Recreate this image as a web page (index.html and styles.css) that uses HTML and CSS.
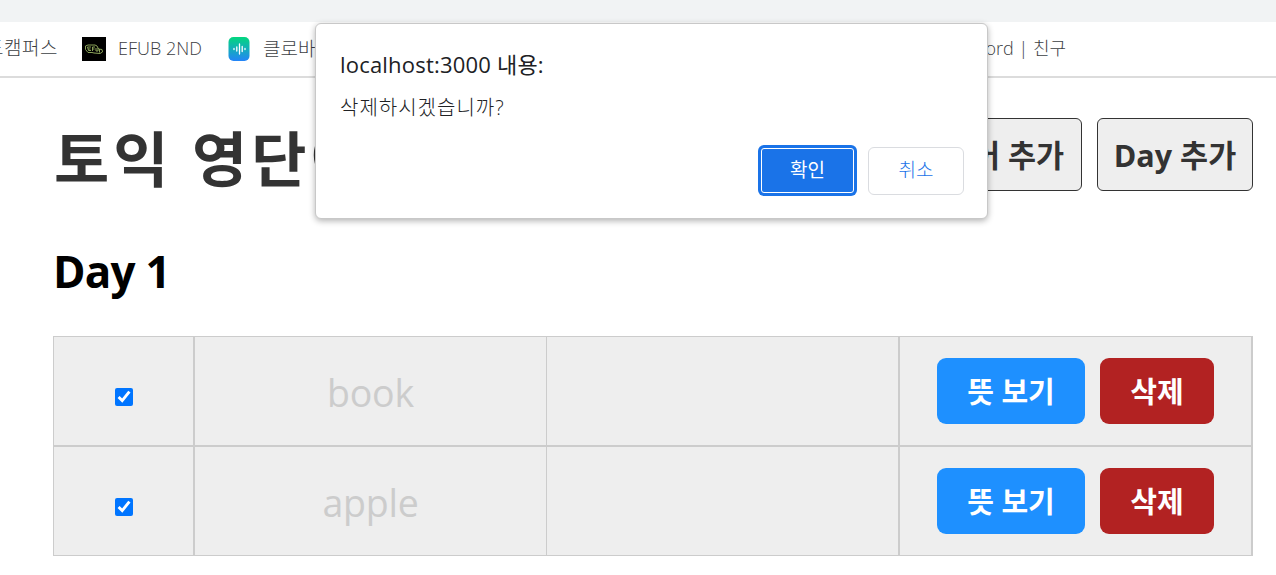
FILE: index.html
```html
<!DOCTYPE html>
<html lang="ko">
<head>
    <meta charset="utf-8">
    <title>토익 영단어</title>
    <meta name="viewport" content="width=device-width, initial-scale=1">
    <link rel="stylesheet" href="styles.css">
</head>
<body>
<div class="tab-strip"></div>
<nav class="bookmarks">
    <span class="bookmark campus">드캠퍼스</span>
    <span class="bookmark efub">
        <svg class="icon" viewBox="0 0 24 24">
            <rect width="24" height="24" fill="#000"/>
            <g fill="none" stroke="#8ba35a" stroke-width="1" stroke-linejoin="round">
                <path d="M3.500 9L6 8H13L15 9L16.500 12L20 12.500L20.500 15L18 16.500L12 16L10 15.500L6 15.500L3.500 12.500Z"/>
                <path d="M9 10H5.500L6.500 13.500H9M6 12H8.500M10.500 14V10H13M10.500 12H12.500M14 11V14H16V11M17.500 15.500V12"/>
            </g>
        </svg>
        <span class="name">EFUB 2ND</span>
    </span>
    <span class="bookmark clova">
        <svg class="icon" viewBox="0 0 24 24">
            <defs>
                <linearGradient id="clova" x1="0" y1="0" x2="0" y2="1">
                    <stop offset="0" stop-color="#03d77e"/>
                    <stop offset="1" stop-color="#2484f8"/>
                </linearGradient>
            </defs>
            <rect x="1.500" width="21" height="24" rx="5" fill="url(#clova)"/>
            <path d="M7 11.500v1M9.800 10v4M12.500 7v10M15.200 9.500v5M18 11.500v1" stroke="#fff" stroke-width="1.300" stroke-linecap="round"/>
        </svg>
        <span class="name">클로바</span>
    </span>
    <span class="bookmark discord">Discord | 친구</span>
</nav>

<main class="page">
    <header class="header">
        <h1>토익 영단어</h1>
        <div class="menu">
            <a class="link">단어 추가</a>
            <a class="link">Day 추가</a>
        </div>
    </header>
    <h2>Day 1</h2>
    <table>
        <tbody>
        <tr class="off">
            <td class="check"><input type="checkbox" checked></td>
            <td class="eng">book</td>
            <td class="kor"></td>
            <td class="actions">
                <button>뜻 보기</button><button class="btn-del">삭제</button>
            </td>
        </tr>
        <tr class="off">
            <td class="check"><input type="checkbox" checked></td>
            <td class="eng">apple</td>
            <td class="kor"></td>
            <td class="actions">
                <button>뜻 보기</button><button class="btn-del">삭제</button>
            </td>
        </tr>
        </tbody>
    </table>
</main>

<div class="dialog">
    <div class="dialog-title">localhost:3000 내용:</div>
    <div class="dialog-message">삭제하시겠습니까?</div>
    <div class="dialog-buttons">
        <button class="ok">확인</button>
        <button class="cancel">취소</button>
    </div>
</div>
</body>
</html>
```

FILE: styles.css
```css
* {
    box-sizing: border-box;
    font-family: "Open Sans", "Noto Sans CJK KR", sans-serif;
}

html, body {
    margin: 0;
    padding: 0;
    background-color: #fff;
}

body {
    height: 575px;
    overflow: hidden;
}

.tab-strip {
    height: 22px;
    background-color: #f1f3f4;
}

.bookmarks {
    display: flex;
    align-items: center;
    height: 56px;
    padding-bottom: 1px;
    border-bottom: 2px solid #dcdcdc;
    color: #3c4043;
    font-size: 18px;
    font-weight: 300;
    white-space: nowrap;
    overflow: hidden;
}

.bookmark {
    display: flex;
    align-items: center;
    gap: 12px;
}

.name {
    padding-bottom: 2px;
}

.campus {
    width: 82px;
    padding-right: 24px;
    padding-bottom: 3px;
    justify-content: flex-end;
    font-size: 19px;
    letter-spacing: 0.5px;
}

.efub {
    width: 145px;
}

.clova .name {
    font-size: 19px;
}

.icon {
    width: 24px;
    height: 24px;
    margin-top: 1px;
    flex: none;
}

.discord {
    margin-left: auto;
    margin-right: 210px;
    padding-bottom: 3px;
}

.page {
    width: 1200px;
    margin-left: 53px;
}

.header {
    display: flex;
    justify-content: space-between;
    align-items: center;
    height: 113px;
    padding-top: 40px;
}

h1 {
    margin: 0;
    padding: 8px 0 0 1px;
    color: #333;
    font-size: 60px;
    line-height: 80px;
    letter-spacing: 4px;
    white-space: nowrap;
}

.menu {
    display: flex;
    gap: 15px;
}

.link {
    display: flex;
    align-items: center;
    justify-content: center;
    width: 156px;
    height: 73px;
    padding-bottom: 1px;
    border: 1px solid #333;
    border-radius: 6px;
    background-color: #eee;
    color: #333;
    font-size: 30.5px;
    font-weight: bold;
    white-space: nowrap;
}

h2 {
    margin: 45px 0 30px;
    font-size: 44px;
    line-height: 70px;
    letter-spacing: -0.8px;
}

table {
    width: 1200px;
    table-layout: fixed;
    border-collapse: separate;
    border-spacing: 0;
}

td {
    height: 110px;
    padding: 0;
    border: 1px solid #ccc;
    font-size: 37.5px;
    text-align: center;
}

.check {
    width: 141px;
    padding-top: 1px;
}

.eng {
    width: 353px;
    padding-top: 2px;
    letter-spacing: -0.2px;
}

.kor {
    width: 352px;
    border-left: 0;
}

.actions {
    width: 354px;
    padding-bottom: 1px;
    border-right-width: 2px;
}

.off td {
    background-color: #eee;
    color: #ccc;
}

.check input {
    width: 18px;
    height: 18px;
    margin: 0;
}

td button {
    width: 148px;
    height: 66px;
    padding: 0 0 2px;
    border: 0;
    border-radius: 9px;
    background-color: dodgerblue;
    color: #fff;
    font-size: 29px;
    font-weight: bold;
}

td .btn-del {
    width: 114px;
    margin-left: 15px;
    background-color: firebrick;
}

/* confirm window over the page */
.dialog {
    position: absolute;
    top: 23px;
    left: 315px;
    width: 673px;
    height: 196px;
    padding: 24px 23px 23px 24px;
    border: 1px solid #c8c8c8;
    border-radius: 6px;
    background-color: #fff;
    box-shadow: 0 2px 6px rgba(0, 0, 0, .3);
    color: #202124;
}

.dialog-title {
    font-size: 22px;
    line-height: 32px;
    letter-spacing: 0.2px;
}

.dialog-message {
    margin-top: 14px;
    font-size: 20px;
    font-weight: 300;
    line-height: 28px;
    letter-spacing: 1px;
}

.dialog-buttons {
    display: flex;
    justify-content: flex-end;
    align-items: flex-start;
    gap: 14px;
    margin-top: 25px;
}

.dialog-buttons button {
    width: 96px;
    height: 48px;
    padding: 0 0 4px;
    border: 1px solid #dadce0;
    border-radius: 6px;
    background-color: #fff;
    color: #1a73e8;
    font-size: 19px;
    font-weight: 300;
}

.dialog-buttons .ok {
    width: 93px;
    height: 45px;
    margin-top: 1px;
    padding-bottom: 3px;
    border: 1px solid #fff;
    border-radius: 3px;
    background-color: #1a73e8;
    box-shadow: 0 0 0 3px #1a73e8;
    color: #fff;
    font-weight: 400;
}
```
